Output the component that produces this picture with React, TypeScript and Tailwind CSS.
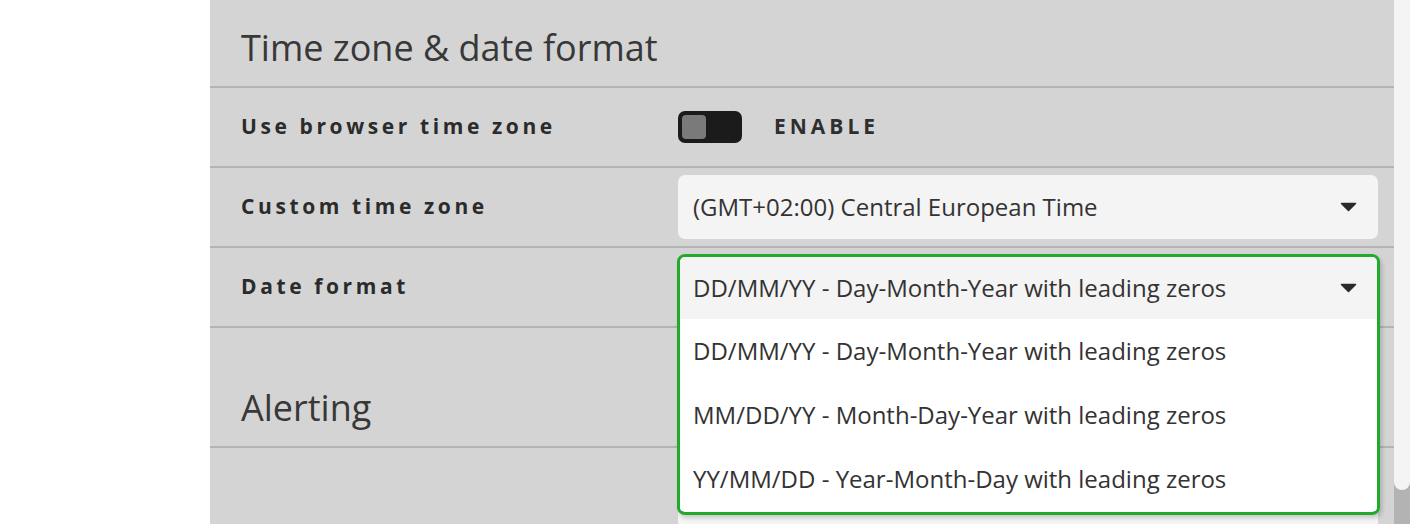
import React from "react";

function Caret() {
  return (
    <svg width="17" height="10" viewBox="0 0 17 10" className="shrink-0">
      <path d="M1.5 1.5 H15.5 L8.5 8.5 Z" fill="#2a2a2a" stroke="#2a2a2a" strokeWidth="1.5" strokeLinejoin="round" />
    </svg>
  );
}

function Label({ children }: { children: React.ReactNode }) {
  return (
    <div className="w-[468px] shrink-0 pl-[31px] text-[21px] font-bold tracking-[3.6px] text-[#2b2b2b]">
      {children}
    </div>
  );
}

const options = [
  "DD/MM/YY - Day-Month-Year with leading zeros",
  "MM/DD/YY - Month-Day-Year with leading zeros",
  "YY/MM/DD - Year-Month-Day with leading zeros",
];

export default function App() {
  return (
    <div className="flex h-[524px] w-full overflow-hidden bg-white font-['Open_Sans',sans-serif]">
      <div className="w-[210px] shrink-0 bg-white" />
      <div className="flex min-w-0 flex-1 flex-col bg-[#d4d4d4]">
        <div className="flex h-[88px] shrink-0 items-end border-b-2 border-[#b4b4b4] pb-[20px] pl-[31px]">
          <h2 className="text-[36px] leading-[36px] text-[#383838]">Time zone &amp; date format</h2>
        </div>

        <div className="flex h-[80px] shrink-0 items-center border-b-2 border-[#b4b4b4]">
          <Label>Use browser time zone</Label>
          <div className="flex items-center gap-[32px]">
            <div className="flex h-[32px] w-[64px] items-center rounded-[7px] bg-[#1b1b1b] p-[4px]">
              <div className="h-[24px] w-[24px] rounded-[4px] bg-[#7a7a7a]" />
            </div>
            <span className="text-[21px] font-bold tracking-[4px] text-[#2e2e2e]">ENABLE</span>
          </div>
        </div>

        <div className="flex h-[80px] shrink-0 items-center border-b-2 border-[#b4b4b4]">
          <Label>Custom time zone</Label>
          <div className="flex h-[64px] w-[700px] items-center justify-between rounded-[7px] bg-[#f4f4f4] pl-[15px] pr-[21px]">
            <span className="text-[24px] text-[#333]">(GMT+02:00) Central European Time</span>
            <Caret />
          </div>
        </div>

        <div className="relative z-10 flex h-[80px] shrink-0 items-center border-b-2 border-[#b4b4b4]">
          <Label>Date format</Label>
          <div className="relative h-[64px] w-[700px]">
            <div className="absolute -left-px -right-[2px] -top-px flex h-[261px] flex-col overflow-hidden rounded-[8px] border-[3px] border-[#21aa2b] bg-white shadow-[2px_3px_4px_rgba(0,0,0,0.18)]">
              <div className="flex h-[62px] shrink-0 items-center justify-between bg-[#f4f4f4] pl-[13px] pr-[20px] shadow-[0_1px_2px_rgba(0,0,0,0.08)]">
                <span className="text-[24px] text-[#333]">{options[0]}</span>
                <Caret />
              </div>
              <div className="flex flex-col bg-white">
                {options.map((o) => (
                  <div key={o} className="flex h-[64px] items-center pl-[13px] text-[24px] text-[#333]">
                    {o}
                  </div>
                ))}
              </div>
            </div>
          </div>
        </div>

        <div className="flex h-[120px] shrink-0 items-end border-b-2 border-[#b4b4b4] pb-[20px] pl-[31px]">
          <h2 className="text-[36px] leading-[36px] text-[#383838]">Alerting</h2>
        </div>

        <div className="flex h-[80px] shrink-0 items-start pt-[9px]">
          <div className="w-[468px] shrink-0" />
          <div className="h-[80px] w-[700px] rounded-[7px] bg-[#f4f4f4]" />
        </div>
      </div>
      <div className="flex w-[16px] shrink-0 flex-col bg-[#b3b3b3]">
        <div className="h-[490px] rounded-b-[8px] bg-[#f4f4f4]" />
      </div>
    </div>
  );
}
